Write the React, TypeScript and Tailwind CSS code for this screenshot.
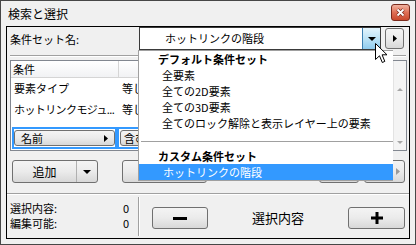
import React from 'react'

const font = "font-['Noto_Sans_CJK_JP','Noto_Sans',sans-serif]"

const defaultSets = ['全要素', '全ての2D要素', '全ての3D要素', '全てのロック解除と表示レイヤー上の要素']

function Tri({ dir, className = '' }: { dir: 'down' | 'right' | 'up'; className?: string }) {
  if (dir === 'down') {
    return (
      <svg width="8" height="4" viewBox="0 0 8 4" className={className}>
        <path d="M0 0 H8 L4 4 Z" fill="currentColor" />
      </svg>
    )
  }
  if (dir === 'up') {
    return (
      <svg width="6" height="3" viewBox="0 0 6 3" className={className}>
        <path d="M0 3 H6 L3 0 Z" fill="currentColor" />
      </svg>
    )
  }
  return (
    <svg width="4" height="7" viewBox="0 0 4 7" className={className}>
      <path d="M0 0 V7 L4 3.5 Z" fill="currentColor" />
    </svg>
  )
}

function GrayButton({ className = '', children }: { className?: string; children?: React.ReactNode }) {
  return (
    <div
      className={`flex items-center rounded-[3px] border border-[#707070] bg-linear-to-b from-[#f4f4f4] via-[#ebebeb] to-[#d8d8d8] ${className}`}
    >
      {children}
    </div>
  )
}

function Dropdown() {
  return (
    <div className="absolute left-[131px] top-[23px] w-[255px] h-[131px] border border-[#a0a0a0] border-r-0 bg-white text-[11px] text-black whitespace-nowrap">
      <div className="h-[16px] pl-[19px] flex items-center font-bold">デフォルト条件セット</div>
      {defaultSets.map(s => (
        <div key={s} className="h-[16px] pl-[23px] flex items-center">
          {s}
        </div>
      ))}
      <div className="h-[17px] pt-[10px]">
        <div className="ml-[2px] h-px bg-[#a0a0a0]" />
      </div>
      <div className="h-[16px] pl-[19px] flex items-center font-bold">カスタム条件セット</div>
      <div className="h-[16px] pl-[24px] flex items-center bg-[#3399ff] text-white">ホットリンクの階段</div>
    </div>
  )
}

function Cursor() {
  return (
    <svg width="13" height="21" viewBox="0 0 13 21" className="absolute left-[368px] top-[16px]">
      <path
        d="M0.5 0.5 L0.5 16.5 L4.5 12.8 L7.3 19.5 L9.8 18.4 L7.1 11.8 L12 11.8 Z"
        fill="white"
        stroke="black"
        strokeWidth="1"
        strokeLinejoin="miter"
      />
    </svg>
  )
}

export default function App() {
  return (
    <div className={`w-[416px] h-[245px] border border-[#474747] bg-[#f0f0f0] px-[5px] pb-[5px] flex flex-col ${font}`}>
      {/* title bar */}
      <div className="h-[25px] flex items-center justify-between">
        <span className="pl-[2px] text-[12px] text-black">検索と選択</span>
        <div className="mb-[3px] w-[19px] h-[17px] rounded-[3px] border border-[#7a2a1c] bg-linear-to-b from-[#efb2a0] via-[#df6f55] to-[#c9482c] flex items-center justify-center">
          <svg width="9" height="9" viewBox="0 0 9 9">
            <path d="M1.5 1.5 L7.5 7.5 M7.5 1.5 L1.5 7.5" stroke="#7a2a1c" strokeWidth="3.2" />
            <path d="M1.5 1.5 L7.5 7.5 M7.5 1.5 L1.5 7.5" stroke="white" strokeWidth="1.8" />
          </svg>
        </div>
      </div>

      {/* client area */}
      <div className="relative flex-1 border border-black bg-[#f0f0f0] flex flex-col text-[11px] text-black whitespace-nowrap">
        {/* set name row */}
        <div className="h-[24px] flex items-start">
          <div className="w-[132px] h-[24px] pl-[3px] flex items-center">条件セット名:</div>
          <div className="w-[242px] h-[23px] border border-[#3a3a3a] bg-white flex">
            <div className="flex-1 pl-[25px] flex items-center text-[11px]">ホットリンクの階段</div>
            <div className="w-[18px] border-l border-[#3c7fb1] bg-linear-to-b from-[#e3f4fc] via-[#bde3f6] to-[#8fcbee] flex items-center justify-center">
              <Tri dir="down" className="text-black" />
            </div>
          </div>
          <GrayButton className="ml-[4px] mt-[1px] w-[19px] h-[21px] justify-center">
            <Tri dir="right" className="text-black" />
          </GrayButton>
        </div>

        {/* etched separator */}
        <div className="mt-[4px] mx-[3px] h-[2px] border-t border-[#a0a0a0] border-b border-b-white" />

        {/* criteria list */}
        <div className="mt-[3px] ml-[3px] w-[397px] h-[91px] border border-[#828790] bg-white flex">
          <div className="flex-1 flex flex-col">
            <div className="h-[17px] flex border-b border-[#d5d5d5] bg-linear-to-b from-white to-[#f1f2f4]">
              <div className="w-[108px] border-r border-[#d5d5d5] pl-[2px] flex items-center">条件</div>
              <div className="flex-1" />
            </div>
            <div className="h-[21px] flex items-center">
              <div className="w-[108px] pl-[3px]">要素タイプ</div>
              <div className="pl-[3px]">等しい</div>
            </div>
            <div className="h-[21px] flex items-center">
              <div className="w-[108px] pl-[3px] overflow-hidden tracking-[-0.6px]">ホットリンクモジュ...</div>
              <div className="pl-[3px]">等しい</div>
            </div>
            <div className="mt-[7px] h-[22px] flex">
              <div className="ml-px w-[105px] border-2 border-[#3399ff] py-px">
                <GrayButton className="h-[16px] pl-[6px] pr-[6px] justify-between">
                  <span>名前</span>
                  <Tri dir="right" className="text-black" />
                </GrayButton>
              </div>
              <div className="w-[120px] border-2 border-[#3399ff] py-px pl-px">
                <GrayButton className="h-[16px] pl-[3px]">
                  <span>含む</span>
                </GrayButton>
              </div>
            </div>
          </div>
          <div className="w-[13px] border-l border-[#e3e3e3] bg-[#f4f4f4] flex flex-col items-center justify-between pt-[27px] pb-[6px] text-[#a6a6a6]">
            <Tri dir="up" />
            <svg width="6" height="3" viewBox="0 0 6 3">
              <path d="M0 0 H6 L3 3 Z" fill="currentColor" />
            </svg>
          </div>
        </div>

        {/* buttons row */}
        <div className="mt-[9px] h-[23px] flex">
          <GrayButton className="ml-[5px] w-[86px] h-[23px]">
            <div className="w-[64px] h-full border-r border-[#b0b0b0] flex items-center justify-center text-[12px]">追加</div>
            <div className="flex-1 flex items-center justify-center">
              <Tri dir="down" className="text-black" />
            </div>
          </GrayButton>
          <GrayButton className="ml-[24px] w-[85px] h-[23px]" />
          <GrayButton className="ml-auto w-[40px] h-[23px]" />
          <GrayButton className="ml-[5px] mr-[4px] w-[41px] h-[23px] justify-end pr-[4px]">
            <Tri dir="right" className="text-[#9a9a9a]" />
          </GrayButton>
        </div>

        {/* etched separator */}
        <div className="mt-[10px] h-[2px] border-t border-[#a0a0a0] border-b border-b-white" />

        {/* selection summary */}
        <div className="flex-1 flex">
          <div className="w-[131px] pl-[3px] pt-[6px] flex flex-col">
            <div className="h-[15px] flex items-center">
              <span className="w-[113px]">選択内容:</span>
              <span>0</span>
            </div>
            <div className="h-[15px] flex items-center">
              <span className="w-[113px]">編集可能:</span>
              <span>0</span>
            </div>
          </div>
          <div className="my-[2px] w-px bg-[#a0a0a0]" />
          <div className="my-[2px] w-px bg-white" />
          <div className="flex-1 pl-[12px] pr-[4px] pt-[12px] flex items-start">
            <GrayButton className="w-[56px] h-[22px] justify-center">
              <svg width="14" height="3" viewBox="0 0 14 3">
                <rect width="14" height="3" fill="black" />
              </svg>
            </GrayButton>
            <div className="flex-1 h-[22px] flex items-center justify-center text-[13px]">選択内容</div>
            <GrayButton className="w-[57px] h-[22px] justify-center">
              <svg width="12" height="12" viewBox="0 0 12 12">
                <rect x="4.5" width="3" height="12" fill="black" />
                <rect y="4.5" width="12" height="3" fill="black" />
              </svg>
            </GrayButton>
          </div>
        </div>

        <Dropdown />
        <Cursor />
      </div>
    </div>
  )
}
